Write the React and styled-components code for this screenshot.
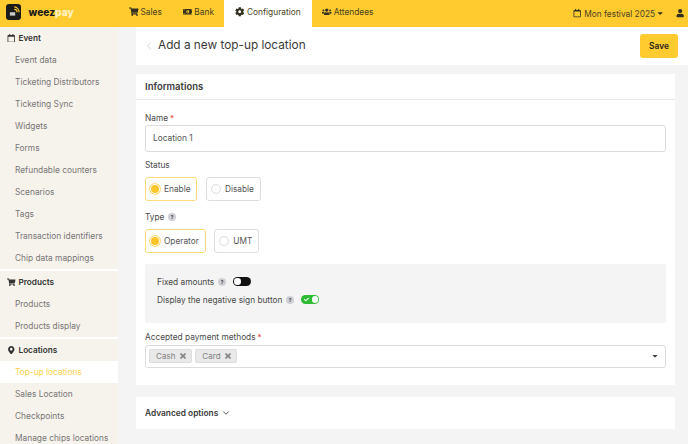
import React from 'react';
import styled, { createGlobalStyle } from 'styled-components';
import { FaShoppingCart, FaMoneyBillAlt, FaCog, FaUsers, FaRegCalendar, FaUser, FaCaretDown, FaMapMarkerAlt, FaTimes, FaQuestion, FaCheck } from 'react-icons/fa';
import { FiChevronLeft, FiChevronDown } from 'react-icons/fi';

const Global = createGlobalStyle`
  html, body { margin: 0; padding: 0; height: 100%; overflow: hidden; background: #f4f4f4; }
  body { font-family: Inter, "Liberation Sans", sans-serif; color: #3c3c3c; }
  #root { width: 688px; height: 444px; overflow: hidden; }
  * { box-sizing: border-box; }
`;

const Page = styled.div`width: 688px; height: 444px; display: flex; flex-direction: column; overflow: hidden;`;
const TopBar = styled.header`height: 27px; flex: none; background: #ffcb2f; display: flex; align-items: stretch;`;
const Brand = styled.div`width: 118px; flex: none; display: flex; align-items: center; padding: 0 0 3px 5.5px; gap: 7.5px;`;
const LogoBox = styled.span`width: 15.5px; height: 15.5px; border-radius: 3px; background: #1b1b1b; display: block; svg { display: block; }`;
const Word = styled.span`font-size: 10.2px; font-weight: 800; color: #1c1c1c; b { color: #fff2c4; font-weight: 800; }`;
const Tabs = styled.nav`display: flex; align-items: stretch; flex: none; margin-left: .5px;`;
const Tab = styled.div`
  display: flex; align-items: center; gap: 2px; font-size: 8.35px; padding: 0 ${p => p.$active ? '11px' : '10.5px'} 3px; color: #4a4220;
  background: ${p => p.$active ? '#fff' : 'transparent'};
  svg { color: #33301f; font-size: 9.5px; width: auto; }
`;
const Right = styled.div`margin-left: auto; display: flex; align-items: center; padding: 0 4px 0 0; font-size: 8.35px; color: #4a4220; svg { color: #33301f; }`;
const Festival = styled.span`display: flex; align-items: center; gap: 3px; margin-right: 11.6px;`;
const FestivalCaret = styled(FaCaretDown)`margin-left: -2.4px;`;
const Body = styled.div`flex: 1; display: flex; min-height: 0;`;
const Side = styled.aside`width: 118px; flex: none; background: #f6f2ec; overflow: hidden;`;
const Group = styled.div`border-top: ${p => p.$first ? '0' : '2px solid #fff'};`;
const GroupTitle = styled.div`height: 22px; padding-left: 7px; display: flex; align-items: center; gap: 3px; font-size: 8.2px; font-weight: 600; color: #333; svg { font-size: 8.5px; color: #333; }`;
const Item = styled.div`
  height: 22px; padding-left: 15px; display: flex; align-items: center; font-size: 8.35px; white-space: nowrap;
  color: ${p => p.$active ? '#ffd24a' : '#777'}; background: ${p => p.$active ? '#fff' : 'transparent'};
`;
const Main = styled.main`flex: 1; min-width: 0; padding-left: 18px; display: flex; flex-direction: column;`;
const PageHead = styled.div`height: 38px; flex: none; background: #fff; display: flex; align-items: center; padding: 0 10px 0 7px;`;
const Back = styled.span`color: #d4d4de; font-size: 12px; display: flex; width: 15px;`;
const Title = styled.h1`margin: 0 0 2px; font-size: 11.8px; font-weight: 400; color: #3a3a3a;`;
const Save = styled.button`
  margin-left: auto; width: 38px; height: 24px; background: #ffcb2f; border: 0; border-radius: 3px; font: 600 8.4px Inter, sans-serif; color: #1c1c1c; padding: 0;
`;
const Content = styled.div`width: 539px; padding-top: 9px; display: flex; flex-direction: column; gap: 12px;`;
const Card = styled.section`background: #fff;`;
const CardHead = styled.div`height: 25.5px; border-bottom: 1px solid #e8e8e8; padding-left: 9px; display: flex; align-items: center; font-size: 9.5px; font-weight: 600; color: #3a3a3a;`;
const Form = styled.div`padding: 12px 9px 17px 9px; display: flex; flex-direction: column;`;
const Label = styled.div`height: 12px; display: flex; align-items: center; gap: 4px; margin-top: ${p => p.$mt || 0}px; font-size: 8.3px; color: #4a4a4a; white-space: nowrap;`;
const Star = styled.span`color: #e33; margin-left: -2px; font-size: 8px;`;
const Input = styled.div`height: 27px; margin-top: 1px; border: 1px solid #dcdcdc; border-radius: 3px; display: flex; align-items: center; padding-left: 7px; font-size: 8.35px; color: #555;`;
const Radios = styled.div`display: flex; gap: 8.5px; margin-top: 6px; margin-bottom: 10px;`;
const Radio = styled.div`
  height: 24px; display: flex; align-items: center; gap: 4px; padding: 0 6px 0 4px; font-size: 8.3px; color: #555; border-radius: 3px;
  border: 1px solid ${p => p.$on ? '#ffdb7a' : '#dedede'};
`;
const Dot = styled.span`
  width: 10px; height: 10px; border-radius: 50%; display: block; flex: none;
  ${p => p.$on ? 'background: #ffc42a; box-shadow: 0 0 0 1px #fff inset, 0 0 0 1px #ffdb7a;' : 'border: 1px solid #dcdcdc; background: #fff;'}
`;
const Help = styled.span`
  width: 8px; height: 8px; border-radius: 50%; background: #cfd0d6; display: inline-flex; align-items: center; justify-content: center; flex: none;
  svg { font-size: 4px; color: #555; }
`;
const Options = styled.div`background: #f4f4f4; border-radius: 2px; height: 59px; padding: 12px 12px 0 12px; display: flex; flex-direction: column; gap: 6px; margin-top: 1px;`;
const OptRow = styled.div`height: 12px; display: flex; align-items: center; gap: 4px; font-size: 8.3px; color: #4a4a4a;`;
const Switch = styled.span`
  width: 18px; height: 9px; border-radius: 5px; display: flex; align-items: center; flex: none; padding: 1.2px; margin-left: 3px;
  background: ${p => p.$on ? '#2dbb33' : '#111'}; justify-content: ${p => p.$on ? 'flex-end' : 'flex-start'}; position: relative;
  i { width: 6.6px; height: 6.6px; background: #fff; border-radius: 50%; display: block; }
  svg { position: absolute; left: 2.5px; top: 2px; font-size: 5px; color: #fff; }
`;
const Select = styled.div`height: 23px; margin-top: 2px; border: 1px solid #dcdcdc; border-radius: 3px; display: flex; align-items: center; padding: 0 6px 0 3px; gap: 3px;`;
const Chip = styled.span`height: 14px; padding: 0 4px 0 6px; background: #e9e9e9; border: 1px solid #dedede; border-radius: 2px; display: flex; align-items: center; gap: 3.5px; font-size: 8px; letter-spacing: .1px; color: #808080; svg { font-size: 8px; color: #888; stroke: #888; stroke-width: 30; }`;
const Caret = styled.span`margin-left: auto; display: flex; color: #444; font-size: 8px;`;
const Advanced = styled.div`height: 32px; background: #fff; padding-left: 9px; display: flex; align-items: center; gap: 3px; font-size: 8.35px; font-weight: 600; color: #3a3a3a; svg { font-size: 10px; }`;

const mainItems = ['Event data', 'Ticketing Distributors', 'Ticketing Sync', 'Widgets', 'Forms', 'Refundable counters', 'Scenarios', 'Tags', 'Transaction identifiers', 'Chip data mappings'];

const Logo = () => (
  <LogoBox>
    <svg viewBox="0 0 16 16" width="15.5" height="15.5">
      <rect x="4" y="8.5" width="5.5" height="3.5" fill="#c9c9c9" />
      <path d="M8.5 5.5a3 3 0 0 1 3 3M8.5 3a5.5 5.5 0 0 1 5 5.5" stroke="#ffcb2f" strokeWidth="1.2" fill="none" />
    </svg>
  </LogoBox>
);

export default function App() {
  return (
    <Page>
      <Global />
      <TopBar>
        <Brand><Logo /><Word>weez<b>pay</b></Word></Brand>
        <Tabs>
          <Tab><FaShoppingCart />Sales</Tab>
          <Tab><FaMoneyBillAlt />Bank</Tab>
          <Tab $active><FaCog />Configuration</Tab>
          <Tab><FaUsers />Attendees</Tab>
        </Tabs>
        <Right>
          <Festival><FaRegCalendar />Mon festival 2025<FestivalCaret /></Festival>
          <FaUser />
        </Right>
      </TopBar>
      <Body>
        <Side>
          <Group $first>
            <GroupTitle><FaRegCalendar />Event</GroupTitle>
            {mainItems.map(t => <Item key={t}>{t}</Item>)}
          </Group>
          <Group>
            <GroupTitle><FaShoppingCart />Products</GroupTitle>
            <Item>Products</Item>
            <Item>Products display</Item>
          </Group>
          <Group>
            <GroupTitle><FaMapMarkerAlt />Locations</GroupTitle>
            <Item $active>Top-up locations</Item>
            <Item>Sales Location</Item>
            <Item>Checkpoints</Item>
            <Item>Manage chips locations</Item>
          </Group>
        </Side>
        <Main>
          <PageHead>
            <Back><FiChevronLeft /></Back>
            <Title>Add a new top-up location</Title>
            <Save>Save</Save>
          </PageHead>
          <Content>
            <Card>
              <CardHead>Informations</CardHead>
              <Form>
                <Label>Name <Star>*</Star></Label>
                <Input>Location 1</Input>
                <Label $mt={7}>Status</Label>
                <Radios>
                  <Radio $on><Dot $on />Enable</Radio>
                  <Radio><Dot />Disable</Radio>
                </Radios>
                <Label>Type <Help><FaQuestion /></Help></Label>
                <Radios>
                  <Radio $on><Dot $on />Operator</Radio>
                  <Radio><Dot />UMT</Radio>
                </Radios>
                <Options>
                  <OptRow>Fixed amounts <Help><FaQuestion /></Help><Switch><i /></Switch></OptRow>
                  <OptRow>Display the negative sign button <Help><FaQuestion /></Help><Switch $on><FaCheck /><i /></Switch></OptRow>
                </Options>
                <Label $mt={8}>Accepted payment methods <Star>*</Star></Label>
                <Select>
                  <Chip>Cash <FaTimes /></Chip>
                  <Chip>Card <FaTimes /></Chip>
                  <Caret><FaCaretDown /></Caret>
                </Select>
              </Form>
            </Card>
            <Advanced>Advanced options <FiChevronDown /></Advanced>
          </Content>
        </Main>
      </Body>
    </Page>
  );
}
